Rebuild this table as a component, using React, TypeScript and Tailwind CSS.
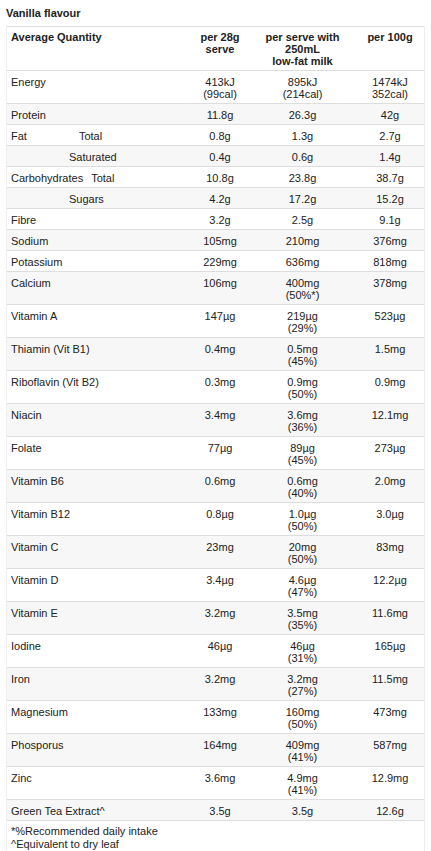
import React from 'react';

type Row = {
  label: string;
  sub?: string;
  subPad?: string;
  a: string[];
  b: string[];
  c: string[];
};

const rows: Row[] = [
  { label: 'Energy', a: ['413kJ', '(99cal)'], b: ['895kJ', '(214cal)'], c: ['1474kJ', '352cal)'] },
  { label: 'Protein', a: ['11.8g'], b: ['26.3g'], c: ['42g'] },
  { label: 'Fat', sub: 'Total', subPad: 'pl-[52px]', a: ['0.8g'], b: ['1.3g'], c: ['2.7g'] },
  { label: '', sub: 'Saturated', subPad: 'pl-[58px]', a: ['0.4g'], b: ['0.6g'], c: ['1.4g'] },
  { label: 'Carbohydrates', sub: 'Total', subPad: 'pl-[8px]', a: ['10.8g'], b: ['23.8g'], c: ['38.7g'] },
  { label: '', sub: 'Sugars', subPad: 'pl-[58px]', a: ['4.2g'], b: ['17.2g'], c: ['15.2g'] },
  { label: 'Fibre', a: ['3.2g'], b: ['2.5g'], c: ['9.1g'] },
  { label: 'Sodium', a: ['105mg'], b: ['210mg'], c: ['376mg'] },
  { label: 'Potassium', a: ['229mg'], b: ['636mg'], c: ['818mg'] },
  { label: 'Calcium', a: ['106mg'], b: ['400mg', '(50%*)'], c: ['378mg'] },
  { label: 'Vitamin A', a: ['147µg'], b: ['219µg', '(29%)'], c: ['523µg'] },
  { label: 'Thiamin (Vit B1)', a: ['0.4mg'], b: ['0.5mg', '(45%)'], c: ['1.5mg'] },
  { label: 'Riboflavin (Vit B2)', a: ['0.3mg'], b: ['0.9mg', '(50%)'], c: ['0.9mg'] },
  { label: 'Niacin', a: ['3.4mg'], b: ['3.6mg', '(36%)'], c: ['12.1mg'] },
  { label: 'Folate', a: ['77µg'], b: ['89µg', '(45%)'], c: ['273µg'] },
  { label: 'Vitamin B6', a: ['0.6mg'], b: ['0.6mg', '(40%)'], c: ['2.0mg'] },
  { label: 'Vitamin B12', a: ['0.8µg'], b: ['1.0µg', '(50%)'], c: ['3.0µg'] },
  { label: 'Vitamin C', a: ['23mg'], b: ['20mg', '(50%)'], c: ['83mg'] },
  { label: 'Vitamin D', a: ['3.4µg'], b: ['4.6µg', '(47%)'], c: ['12.2µg'] },
  { label: 'Vitamin E', a: ['3.2mg'], b: ['3.5mg', '(35%)'], c: ['11.6mg'] },
  { label: 'Iodine', a: ['46µg'], b: ['46µg', '(31%)'], c: ['165µg'] },
  { label: 'Iron', a: ['3.2mg'], b: ['3.2mg', '(27%)'], c: ['11.5mg'] },
  { label: 'Magnesium', a: ['133mg'], b: ['160mg', '(50%)'], c: ['473mg'] },
  { label: 'Phosporus', a: ['164mg'], b: ['409mg', '(41%)'], c: ['587mg'] },
  { label: 'Zinc', a: ['3.6mg'], b: ['4.9mg', '(41%)'], c: ['12.9mg'] },
  { label: 'Green Tea Extract^', a: ['3.5g'], b: ['3.5g'], c: ['12.6g'] },
];

const grid = 'grid grid-cols-[179px_68px_97px_78px]';

function Cell({ lines, pad = 'pt-[5px] pb-[3px]' }: { lines: string[]; pad?: string }) {
  return (
    <div className={`text-center ${pad}`}>
      {lines.map((l, i) => (
        <div key={i}>{l}</div>
      ))}
    </div>
  );
}

export default function App() {
  return (
    <div
      className="bg-white w-[431px] min-h-[851px] text-[11px] leading-[12px] text-[#222]"
      style={{ fontFamily: '"Liberation Sans", Arial, sans-serif' }}
    >
      <div className="pl-[6px] pt-[7px] pb-[7px] font-bold">Vanilla flavour</div>
      <div className="mx-[6px] border-x border-[#eee]">
        {/* Header */}
        <div className={`${grid} border-y border-[#ddd] font-bold`}>
          <div className="pl-[4px] pt-[4px] pb-[3px]">Average Quantity</div>
          <Cell lines={['per 28g', 'serve']} pad="pt-[4px] pb-[3px]" />
          <Cell lines={['per serve with', '250mL', 'low-fat milk']} pad="pt-[4px] pb-[3px]" />
          <Cell lines={['per 100g']} pad="pt-[4px] pb-[3px]" />
        </div>

        {rows.map((r, i) => (
          <div
            key={i}
            className={`${grid} border-b border-[#ddd] ${i % 2 === 1 ? 'bg-[#f7f7f7]' : 'bg-white'}`}
          >
            <div className="pl-[4px] pt-[5px] pb-[3px] flex whitespace-nowrap">
              <span>{r.label}</span>
              {r.sub && <span className={r.subPad}>{r.sub}</span>}
            </div>
            <Cell lines={r.a} />
            <Cell lines={r.b} />
            <Cell lines={r.c} />
          </div>
        ))}

        {/* Footnotes */}
        <div className="pl-[4px] pt-[4px] pb-[2px] border-b border-[#ddd] leading-[13px]">
          <div>*%Recommended daily intake</div>
          <div>^Equivalent to dry leaf</div>
        </div>
      </div>
    </div>
  );
}
